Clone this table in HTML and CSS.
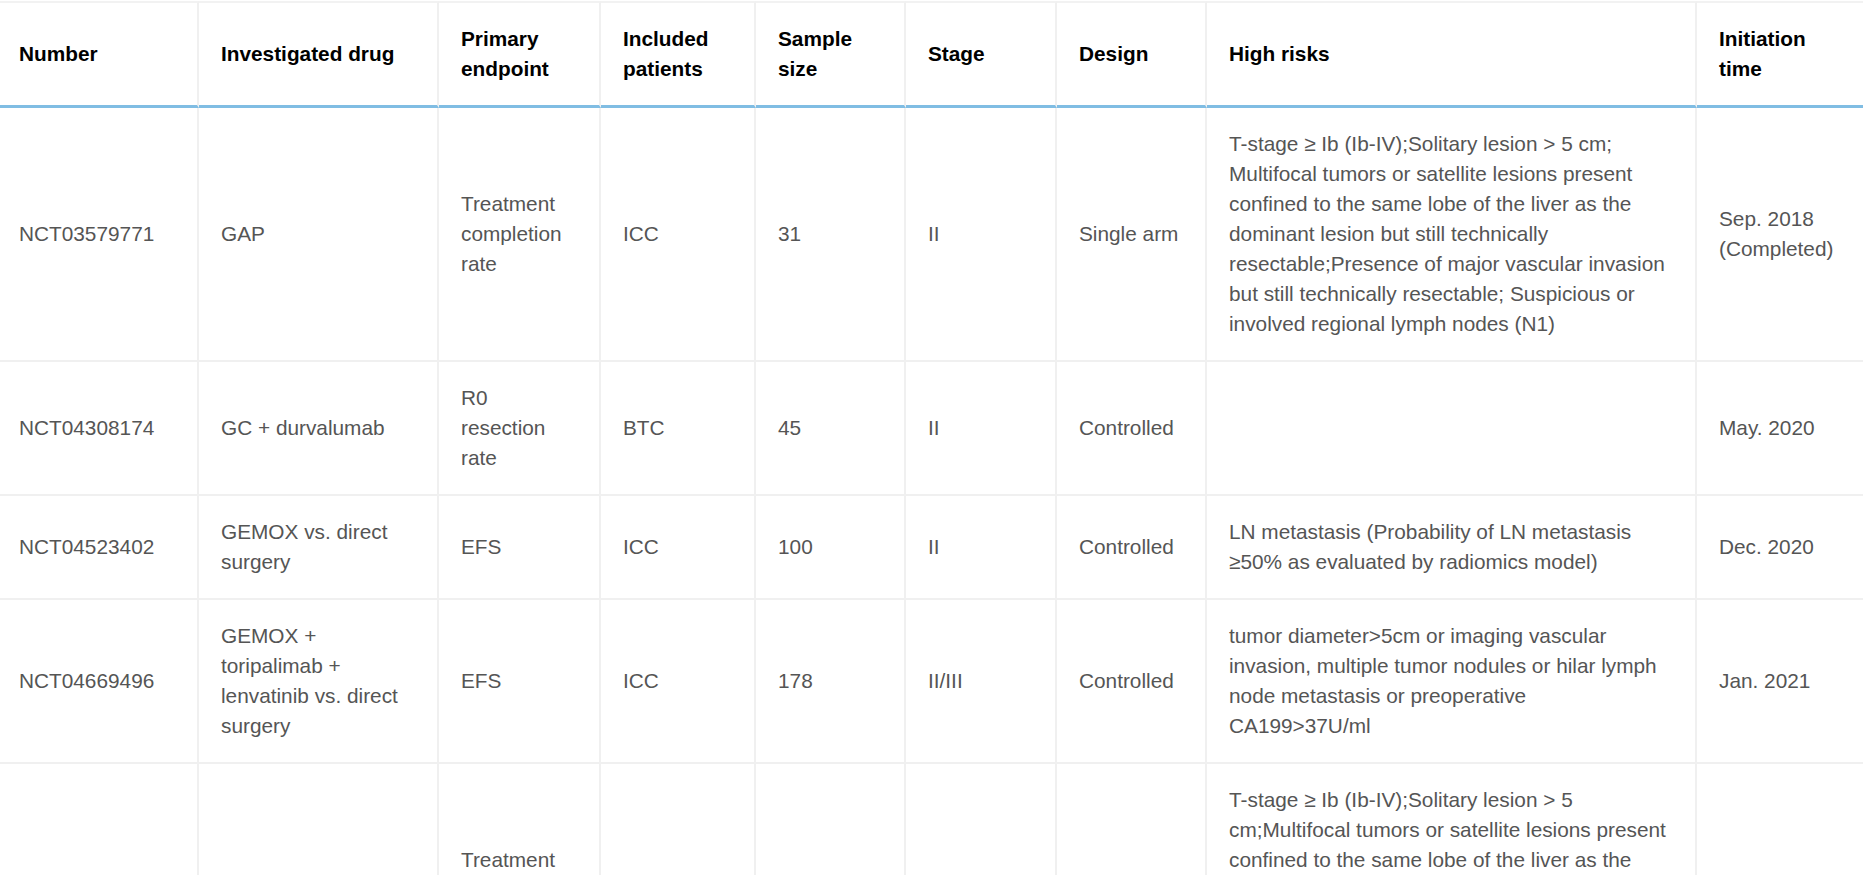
FILE: index.html
```html
<!DOCTYPE html>
<html lang="en">
<head>
<meta charset="utf-8">
<title>Neoadjuvant trials</title>
<link rel="stylesheet" href="styles.css">
</head>
<body>
<div class="wrap">
<table class="trials">
  <colgroup>
    <col class="c-num">
    <col class="c-drug">
    <col class="c-end">
    <col class="c-pat">
    <col class="c-size">
    <col class="c-stage">
    <col class="c-design">
    <col class="c-risk">
    <col class="c-time">
  </colgroup>
  <thead>
    <tr>
      <th>Number</th>
      <th>Investigated drug</th>
      <th>Primary endpoint</th>
      <th>Included patients</th>
      <th>Sample size</th>
      <th>Stage</th>
      <th>Design</th>
      <th>High risks</th>
      <th>Initiation time</th>
    </tr>
  </thead>
  <tbody>
    <tr>
      <td>NCT03579771</td>
      <td>GAP</td>
      <td>Treatment completion rate</td>
      <td>ICC</td>
      <td>31</td>
      <td>II</td>
      <td>Single arm</td>
      <td>T-stage ≥ Ib (Ib-IV);Solitary lesion &gt; 5 cm; Multifocal tumors or satellite lesions present confined to the same lobe of the liver as the dominant lesion but still technically resectable;Presence of major vascular invasion but still technically resectable; Suspicious or involved regional lymph nodes (N1)</td>
      <td>Sep. 2018 (Completed)</td>
    </tr>
    <tr>
      <td>NCT04308174</td>
      <td>GC + durvalumab</td>
      <td>R0 resection rate</td>
      <td>BTC</td>
      <td>45</td>
      <td>II</td>
      <td>Controlled</td>
      <td></td>
      <td>May. 2020</td>
    </tr>
    <tr>
      <td>NCT04523402</td>
      <td>GEMOX vs. direct surgery</td>
      <td>EFS</td>
      <td>ICC</td>
      <td>100</td>
      <td>II</td>
      <td>Controlled</td>
      <td>LN metastasis (Probability of LN metastasis ≥50% as evaluated by radiomics model)</td>
      <td>Dec. 2020</td>
    </tr>
    <tr>
      <td>NCT04669496</td>
      <td>GEMOX + toripalimab + lenvatinib vs. direct surgery</td>
      <td>EFS</td>
      <td>ICC</td>
      <td>178</td>
      <td>II/III</td>
      <td>Controlled</td>
      <td>tumor diameter&gt;5cm or imaging vascular invasion, multiple tumor nodules or hilar lymph node metastasis or preoperative CA199&gt;37U/ml</td>
      <td>Jan. 2021</td>
    </tr>
    <tr>
      <td>NCT04506281</td>
      <td>GAP</td>
      <td>Treatment completion rate</td>
      <td>ICC</td>
      <td>90</td>
      <td>III</td>
      <td>Controlled</td>
      <td>T-stage ≥ Ib (Ib-IV);Solitary lesion &gt; 5 cm;Multifocal tumors or satellite lesions present confined to the same lobe of the liver as the dominant lesion but still technically resectable;Presence of major vascular invasion but still technically resectable; Suspicious or involved regional lymph nodes (N1)</td>
      <td>Aug. 2020</td>
    </tr>
  </tbody>
</table>
</div>
</body>
</html>
```

FILE: styles.css
```css
html, body {
  margin: 0;
  padding: 0;
  background: #ffffff;
  overflow: hidden;
}

.wrap {
  padding-top: 1px;
}

.trials {
  width: 1863px;
  table-layout: fixed;
  border-collapse: separate;
  border-spacing: 0;
  font-family: "Liberation Sans", Arial, sans-serif;
  font-size: 20.8px;
  line-height: 30px;
  color: #555555;
}

.c-num { width: 199px; }
.c-drug { width: 240px; }
.c-end { width: 162px; }
.c-pat { width: 155px; }
.c-size { width: 150px; }
.c-stage { width: 151px; }
.c-design { width: 150px; }
.c-risk { width: 490px; }
.c-time { width: auto; }

.trials th,
.trials td {
  padding: 21px 23px 21px 22px;
  text-align: left;
  vertical-align: middle;
  border-right: 2px solid #f0f0f0;
  border-bottom: 2px solid #f0f0f0;
}

.trials th:last-child,
.trials td:last-child {
  border-right: none;
}

.trials th:first-child,
.trials td:first-child {
  padding-left: 19px;
}

.trials th {
  color: #000000;
  font-weight: bold;
  border-top: 2px solid #f2f2f2;
  border-bottom: 3px solid #80bde3;
}
```
